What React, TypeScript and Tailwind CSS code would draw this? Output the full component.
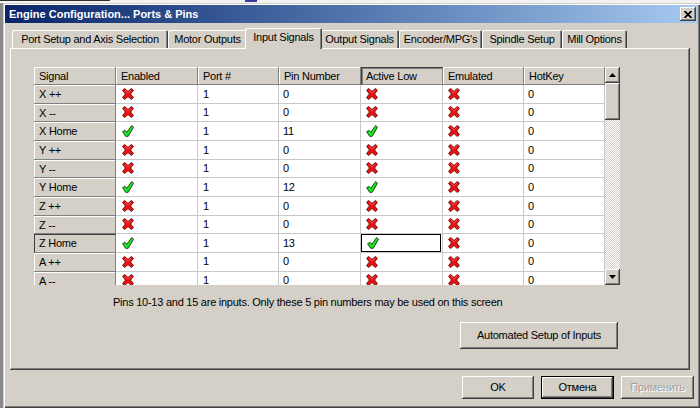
import React from "react";

const raised =
  "shadow-[inset_-1px_-1px_#404040,inset_1px_1px_#ffffff,inset_-2px_-2px_#808080,inset_2px_2px_#d4d0c8]";
const cellRaised = "shadow-[inset_-1px_-1px_#808080,inset_1px_1px_#ffffff]";

const COLS = [
  { label: "Signal", w: "w-[82px]" },
  { label: "Enabled", w: "w-[82px]" },
  { label: "Port #", w: "w-[81px]" },
  { label: "Pin Number", w: "w-[82px]" },
  { label: "Active Low", w: "w-[82px]" },
  { label: "Emulated", w: "w-[81px]" },
  { label: "HotKey", w: "w-[81px]" },
];

// signal, enabled, pin, active low
const ROWS: [string, boolean, string, boolean][] = [
  ["X ++", false, "0", false],
  ["X --", false, "0", false],
  ["X Home", true, "11", true],
  ["Y ++", false, "0", false],
  ["Y --", false, "0", false],
  ["Y Home", true, "12", true],
  ["Z ++", false, "0", false],
  ["Z --", false, "0", false],
  ["Z Home", true, "13", true],
  ["A ++", false, "0", false],
  ["A --", false, "0", false],
];

const TABS = [
  { label: "Port Setup and Axis Selection", w: "w-[156px]" },
  { label: "Motor Outputs", w: "w-[79px]" },
  { label: "Input Signals", w: "w-[77px]", active: true },
  { label: "Output Signals", w: "w-[79px]" },
  { label: "Encoder/MPG's", w: "w-[83px]" },
  { label: "Spindle Setup", w: "w-[80px]" },
  { label: "Mill Options", w: "w-[65px]" },
];

function RedX() {
  return (
    <svg width="12" height="12" viewBox="0 0 12 12" className="block">
      <path
        d="M0.5 2.3 L2.6 0.4 L6 3.4 L9.4 0.4 L11.5 2.3 L8.6 6 L11.5 9.6 L9.4 11.6 L6 8.6 L2.6 11.6 L0.5 9.6 L3.4 6 Z"
        fill="#e81010"
        stroke="#600000"
        strokeWidth="0.8"
        strokeLinejoin="round"
      />
      <path d="M3 2.4 L6 5 L9 2.4" fill="none" stroke="#ff6a6a" strokeWidth="0.7" />
    </svg>
  );
}

function GreenCheck() {
  return (
    <svg width="12" height="12" viewBox="0 0 12 12" className="block">
      <path
        d="M0.6 6.6 L3.2 5.4 L4.9 7.2 L9.6 0.6 L11.5 2.2 L6.2 11.3 L3.6 11.3 Z"
        fill="#22e022"
        stroke="#064006"
        strokeWidth="0.9"
        strokeLinejoin="round"
      />
    </svg>
  );
}

function Flag({ on }: { on: boolean }) {
  return on ? <GreenCheck /> : <RedX />;
}

function Arrow({ up }: { up: boolean }) {
  return (
    <svg width="7" height="4" viewBox="0 0 7 4" className="block">
      <path d={up ? "M3.5 0 L7 4 L0 4 Z" : "M0 0 L7 0 L3.5 4 Z"} fill="#000" />
    </svg>
  );
}

function Grid() {
  return (
    <div className="flex w-[586px] h-[218px] overflow-hidden">
      <div className="w-[571px] flex flex-col">
        {/* header */}
        <div className="flex h-[18px] shrink-0">
          {COLS.map((c) => (
            <div
              key={c.label}
              className={`${c.w} h-full flex items-center pl-[5px] bg-[#d4d0c8] ${
                c.label === "Active Low"
                  ? "shadow-[inset_1px_1px_#404040,inset_2px_2px_#808080,inset_-1px_-1px_#808080]"
                  : cellRaised
              }`}
            >
              {c.label}
            </div>
          ))}
        </div>
        {ROWS.map(([sig, en, pin, low]) => (
          <div key={sig} className="flex h-[18.67px] shrink-0">
            <div
              className={`w-[82px] h-full flex items-center pl-[5px] bg-[#d4d0c8] ${
                sig === "Z Home" ? "shadow-[inset_1px_1px_#404040,inset_-1px_-1px_#808080]" : cellRaised
              }`}
            >
              {sig}
            </div>
            <div className="w-[82px] h-full flex items-center pl-[6px] bg-white border-r border-b border-[#c8c8c8]">
              <Flag on={en} />
            </div>
            <div className="w-[81px] h-full flex items-center pl-[5px] bg-white border-r border-b border-[#c8c8c8]">
              1
            </div>
            <div className="w-[82px] h-full flex items-center pl-[4px] bg-white border-r border-b border-[#c8c8c8]">
              {pin}
            </div>
            <div className="w-[82px] h-full bg-white border-r border-b border-[#c8c8c8] flex">
              <div
                className={`w-[80px] h-full flex items-center pl-[5px] ${
                  sig === "Z Home" ? "border border-black pl-[4px]" : ""
                }`}
              >
                <Flag on={low} />
              </div>
            </div>
            <div className="w-[81px] h-full flex items-center pl-[5px] bg-white border-r border-b border-[#c8c8c8]">
              <RedX />
            </div>
            <div className="w-[81px] h-full flex items-center pl-[4px] bg-white border-r border-b border-[#c8c8c8]">
              0
            </div>
          </div>
        ))}
      </div>
      {/* scrollbar */}
      <div className="w-[15px] h-full flex flex-col bg-[repeating-conic-gradient(#d4d0c8_0_25%,#ffffff_0_50%)] bg-[length:2px_2px]">
        <div className={`h-[16px] bg-[#d4d0c8] flex items-center justify-center ${raised}`}>
          <Arrow up />
        </div>
        <div className={`h-[37px] bg-[#d4d0c8] ${raised}`} />
        <div className={`mt-auto h-[16px] bg-[#d4d0c8] flex items-center justify-center ${raised}`}>
          <Arrow up={false} />
        </div>
      </div>
    </div>
  );
}

export default function App() {
  return (
    <div className="w-[700px] h-[408px] overflow-hidden bg-[#8a8a8a] font-['Liberation_Sans',Arial,sans-serif] text-[11px] tracking-[-0.25px] text-black flex flex-col">
      {/* bit of the window behind */}
      <div className="h-[3px] bg-[#f2f2f2] flex shrink-0">
        <div className="w-[110px] h-[1px] bg-[#303030]" />
        <div className="ml-[135px] w-[12px] h-[2px] bg-[#3a3aa0]" />
      </div>

      <div className="flex-1 ml-[3px] bg-[#d4d0c8] p-[2px] flex flex-col shadow-[inset_1px_1px_#d4d0c8,inset_2px_2px_#ffffff,inset_-1px_-1px_#404040,inset_-2px_-2px_#808080]">
        {/* title bar */}
        <div className="h-[18px] shrink-0 bg-linear-to-r from-[#0a246a] to-[#a6caf0] flex items-center pl-[4px] pr-[2px]">
          <span className="text-white font-bold tracking-normal">Engine Configuration... Ports &amp; Pins</span>
          <div className={`ml-auto w-[16px] h-[14px] bg-[#d4d0c8] flex items-center justify-center ${raised}`}>
            <svg width="8" height="7" viewBox="0 0 8 7">
              <path d="M0.5 0 L7.5 7 M7.5 0 L0.5 7" stroke="#000" strokeWidth="1.8" />
            </svg>
          </div>
        </div>

        {/* tabs */}
        <div className="mt-[5px] ml-[7px] h-[20px] flex items-end shrink-0 relative z-10">
          {TABS.map((t) =>
            t.active ? (
              <div
                key={t.label}
                className={`${t.w} -mx-[2px] h-[21px] -mb-px bg-[#d4d0c8] rounded-t-[2px] flex items-center justify-center pb-[3px] relative z-10 shadow-[inset_1px_1px_#ffffff,inset_-1px_0_#404040,inset_-2px_0_#808080]`}
              >
                {t.label}
              </div>
            ) : (
              <div
                key={t.label}
                className={`${t.w} h-[18px] bg-[#d4d0c8] rounded-t-[2px] flex items-center justify-center shadow-[inset_1px_1px_#ffffff,inset_-1px_0_#404040,inset_-2px_0_#808080]`}
              >
                {t.label}
              </div>
            )
          )}
        </div>

        {/* panel */}
        <div className="ml-[5px] w-[680px] h-[322px] shrink-0 bg-[#d4d0c8] pl-[24px] pt-[19px] flex flex-col shadow-[inset_-1px_-1px_#404040,inset_1px_1px_#ffffff,inset_-2px_-2px_#808080]">
          <Grid />
          <div className="mt-[11px] ml-[79px] h-[13px] leading-[13px]">
            Pins 10-13 and 15 are inputs. Only these 5 pin numbers may be used on this screen
          </div>
          <div className="mt-[13px] ml-[426px]">
            <div className={`w-[158px] h-[27px] bg-[#d4d0c8] flex items-center justify-center ${raised}`}>
              Automated Setup of Inputs
            </div>
          </div>
        </div>

        {/* dialog buttons */}
        <div className="mt-[6px] flex justify-end gap-[7px] pr-[4px]">
          <div className={`w-[72px] h-[23px] bg-[#d4d0c8] flex items-center justify-center ${raised}`}>OK</div>
          <div className="w-[73px] h-[23px] border border-black">
            <div className={`w-full h-full bg-[#d4d0c8] flex items-center justify-center ${raised}`}>Отмена</div>
          </div>
          <div className={`w-[73px] h-[23px] bg-[#d4d0c8] flex items-center justify-center text-[#a0a0a0] [text-shadow:1px_1px_#ffffff] ${raised}`}>
            Применить
          </div>
        </div>
      </div>
    </div>
  );
}
